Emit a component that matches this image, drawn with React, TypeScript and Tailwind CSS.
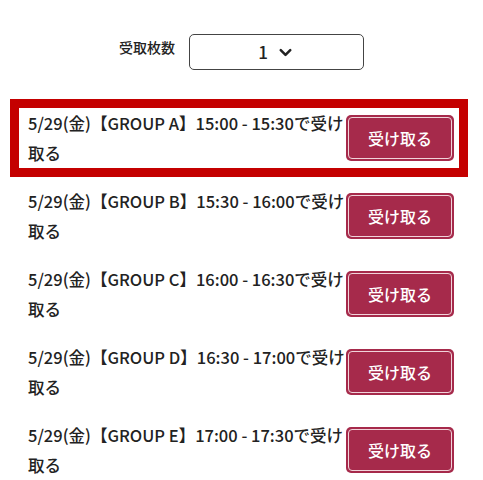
import { ChevronDown } from "lucide-react"

const slots = [
  { group: "A", from: "15:00", to: "15:30", selected: true },
  { group: "B", from: "15:30", to: "16:00", selected: false },
  { group: "C", from: "16:00", to: "16:30", selected: false },
  { group: "D", from: "16:30", to: "17:00", selected: false },
  { group: "E", from: "17:00", to: "17:30", selected: false },
]

function ReceiveButton() {
  return (
    <button className="w-[108px] h-[46px] shrink-0 rounded-[5px] bg-[#a62a4b] p-[2px]">
      <span className="flex h-full w-full items-center justify-center rounded-[4px] border border-[#f1d3da] bg-[#a62a4b] text-[16px] font-medium text-white">
        受け取る
      </span>
    </button>
  )
}

export default function App() {
  return (
    <div
      className="w-[483px] h-[480px] overflow-hidden bg-white text-[#222]"
      style={{ fontFamily: '"Noto Sans CJK JP", "Noto Sans", sans-serif' }}
    >
      <div className="flex justify-center gap-[14px] pt-[34px]">
        <div className="pt-[5px] text-[14px] font-medium leading-[16px]">受取枚数</div>
        <div className="flex h-[36px] w-[175px] items-center justify-center gap-[8px] rounded-[5px] border-[1.5px] border-[#444]">
          <span className="text-[17px] font-medium">1</span>
          <ChevronDown size={19} strokeWidth={3.2} className="mt-[1px]" />
        </div>
      </div>

      <div className="mt-[29px] flex flex-col pl-[10px] pr-[15px]">
        {slots.map((s) => (
          <div
            key={s.group}
            className={
              "flex items-center border-[9px] pl-[9px] pr-[5px] " +
              (s.selected ? "border-[#c40000]" : "border-transparent")
            }
          >
            <p className="min-w-0 flex-1 text-[16.5px] font-medium leading-[30px]">
              5/29(金)【GROUP {s.group}】{s.from} - {s.to}で受け
              <br />
              取る
            </p>
            <ReceiveButton />
          </div>
        ))}
      </div>
    </div>
  )
}
